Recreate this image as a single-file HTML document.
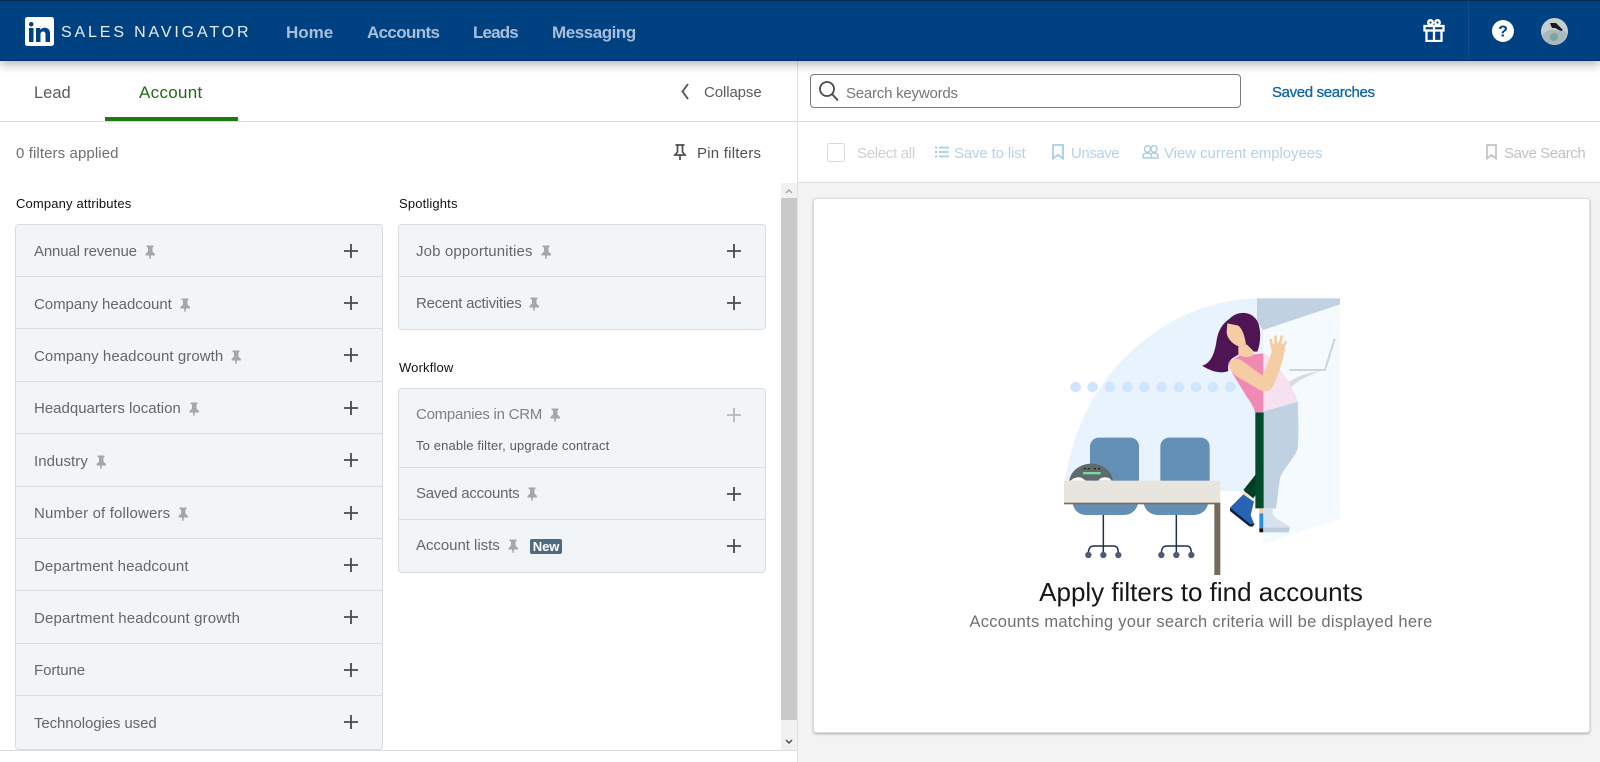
<!DOCTYPE html>
<html><head><meta charset="utf-8"><title>Sales Navigator</title>
<style>
*{box-sizing:border-box}
html,body{margin:0;padding:0;width:1600px;height:762px;overflow:hidden;background:#fff;font-family:"Liberation Sans",sans-serif}
.a{position:absolute;white-space:nowrap;line-height:20px}
#nav{position:absolute;left:0;top:0;width:1600px;height:61px;background:#004182;border-top:1px solid #0b2a55;border-bottom:1px solid #00306e;box-shadow:0 3px 10px rgba(0,0,0,.32);z-index:5}
.n{color:#a9bfd9;font-size:17px;font-weight:bold;top:22px;letter-spacing:-.5px}
.g{position:absolute;background:#f2f5f8;border:1px solid #d9dce0;border-radius:4px}
.r{position:absolute;left:0;right:0;border-bottom:1px solid #d9dce0;color:#666;font-size:15px}
.r:last-child{border-bottom:0}
.r span{position:absolute;left:17px;top:17px;white-space:nowrap;line-height:20px;display:flex;align-items:center}
.l .r span{left:18px;top:17.5px}
.r svg.p{margin-left:7px}
.r svg.x{position:absolute;left:328px;top:19px}
.h{font-size:13px;color:#111;top:194px;letter-spacing:.15px}
.t{font-size:15px}
</style></head><body>
<svg width="0" height="0" style="position:absolute"><defs>
<symbol id="pin" viewBox="0 0 12 14"><path d="M2.500 0.500h7v1.500l-1 .5v4l2.500 2.500v1.500H7L6.500 14h-1L5 10.500H1.500V9L4 6.500v-4l-1.500-.5z" fill="currentColor"/></symbol>
<symbol id="plus" viewBox="0 0 14 14"><path d="M6.100 0h1.800v6.100H14v1.800H7.900V14H6.100V7.900H0V6.100h6.100z" fill="currentColor"/></symbol>
</defs></svg>

<div id="nav">
<svg style="position:absolute;left:25px;top:16px" width="29" height="29" viewBox="0 0 29 29"><rect width="29" height="29" rx="2.500" fill="#fff"/><rect x="4" y="5" width="4.500" height="4.500" rx="2.200" fill="#004182"/><rect x="4" y="11" width="4.500" height="14" fill="#004182"/><path d="M11 11h4.300v2c.8-1.400 2.300-2.300 4.300-2.300 3.700 0 5.400 2.300 5.400 6V25h-4.500v-7.500c0-1.900-.7-3-2.400-3-1.800 0-2.600 1.300-2.600 3V25H11z" fill="#004182"/></svg>
<div class="a" style="left:61px;top:22px;color:#e8eef6;font-size:16px;letter-spacing:2.850px">SALES NAVIGATOR</div>
<div class="a n" style="left:286px;letter-spacing:0">Home</div>
<div class="a n" style="left:367px;letter-spacing:-.65px">Accounts</div>
<div class="a n" style="left:473px;letter-spacing:-.85px">Leads</div>
<div class="a n" style="left:552px;letter-spacing:-.45px">Messaging</div>
<div style="position:absolute;left:1468px;top:0;width:1px;height:59px;background:#0f4c8c"></div>
<svg style="position:absolute;left:1423px;top:18px" width="22" height="23" viewBox="0 0 22 23"><g fill="none" stroke="#fff" stroke-width="2.300"><rect x="1.500" y="7" width="19" height="4.500"/><path d="M3.500 11.500V22h15V11.500M11 7V22"/><circle cx="7.500" cy="3.500" r="2.300"/><circle cx="14.500" cy="3.500" r="2.300"/></g></svg>
<svg style="position:absolute;left:1492px;top:19px" width="22" height="22" viewBox="0 0 22 22"><circle cx="11" cy="11" r="11" fill="#fff"/><text x="11" y="16.500" text-anchor="middle" font-family="Liberation Sans" font-weight="bold" font-size="16" fill="#004182">?</text></svg>
<svg style="position:absolute;left:1541px;top:17px" width="27" height="27" viewBox="0 0 27 27"><circle cx="13.500" cy="13.500" r="13.500" fill="#c6ced0"/><path d="M1 17c4-4 8-6 13-5s8 0 12 3c-1 7-7 12-13 12-5 0-10-4-12-10z" fill="#a8b8bc"/><circle cx="13" cy="19" r="4" fill="#7fa59a"/><path d="M9 5l6 0 7 7-2 1-6-3-3 0z" fill="#17191c"/></svg>
</div>

<!-- left header -->
<div class="a" style="left:34px;top:83px;font-size:16.500px;color:#5b5b5b">Lead</div>
<div class="a" style="left:139px;top:83px;font-size:17px;color:#1f6b12;letter-spacing:.3px">Account</div>
<div style="position:absolute;left:105px;top:117px;width:133px;height:4px;background:#1d7a12"></div>
<div style="position:absolute;left:0;top:121px;width:1600px;height:1px;background:#dcdcdc"></div>
<svg style="position:absolute;left:680px;top:83px" width="11" height="17" viewBox="0 0 11 17"><path d="M8 1L2.500 8.500l5.500 7.500" fill="none" stroke="#555" stroke-width="1.900"/></svg>
<div class="a t" style="left:704px;top:83px;color:#5c5c5c;letter-spacing:-.1px">Collapse</div>
<div class="a t" style="left:16px;top:144px;color:#707070;letter-spacing:.1px">0 filters applied</div>
<svg style="position:absolute;left:673px;top:144px;color:#4d4d4d" width="14" height="17" viewBox="0 0 14 17"><path d="M2.500 1h9M4.500 1v7L2 11h10L9.500 8V1M7 11v5" fill="none" stroke="currentColor" stroke-width="1.700"/></svg>
<div class="a t" style="left:697px;top:144px;color:#505050;letter-spacing:.23px">Pin filters</div>
<div class="a h" style="left:16px">Company attributes</div>
<div class="a h" style="left:399px">Spotlights</div>
<div class="a h" style="left:399px;top:358px">Workflow</div>

<!-- company attributes -->
<div class="g l" style="left:15px;top:224px;width:368px;height:526px">
<div class="r" style="top:0;height:52px"><span style="letter-spacing:-.16px;top:16.500px">Annual revenue<svg class="p" width="12" height="14" color="#a7a7a7"><use href="#pin"/></svg></span><svg class="x" width="14" height="14" color="#4a4a4a"><use href="#plus"/></svg></div>
<div class="r" style="top:52px;height:52.400px"><span style="letter-spacing:-.04px">Company headcount<svg class="p" width="12" height="14" color="#a7a7a7"><use href="#pin"/></svg></span><svg class="x" width="14" height="14" color="#4a4a4a"><use href="#plus"/></svg></div>
<div class="r" style="top:104.400px;height:52.400px"><span style="letter-spacing:.07px">Company headcount growth<svg class="p" width="12" height="14" color="#a7a7a7"><use href="#pin"/></svg></span><svg class="x" width="14" height="14" color="#4a4a4a"><use href="#plus"/></svg></div>
<div class="r" style="top:156.800px;height:52.400px"><span>Headquarters location<svg class="p" width="12" height="14" color="#a7a7a7"><use href="#pin"/></svg></span><svg class="x" width="14" height="14" color="#4a4a4a"><use href="#plus"/></svg></div>
<div class="r" style="top:209.200px;height:52.400px"><span style="letter-spacing:.07px">Industry<svg class="p" width="12" height="14" color="#a7a7a7"><use href="#pin"/></svg></span><svg class="x" width="14" height="14" color="#4a4a4a"><use href="#plus"/></svg></div>
<div class="r" style="top:261.600px;height:52.400px"><span style="letter-spacing:.15px">Number of followers<svg class="p" width="12" height="14" color="#a7a7a7"><use href="#pin"/></svg></span><svg class="x" width="14" height="14" color="#4a4a4a"><use href="#plus"/></svg></div>
<div class="r" style="top:314px;height:52.400px"><span style="letter-spacing:.1px">Department headcount</span><svg class="x" width="14" height="14" color="#4a4a4a"><use href="#plus"/></svg></div>
<div class="r" style="top:366.400px;height:52.400px"><span style="letter-spacing:.16px">Department headcount growth</span><svg class="x" width="14" height="14" color="#4a4a4a"><use href="#plus"/></svg></div>
<div class="r" style="top:418.800px;height:52.400px"><span style="letter-spacing:-.09px">Fortune</span><svg class="x" width="14" height="14" color="#4a4a4a"><use href="#plus"/></svg></div>
<div class="r" style="top:471.200px;height:52.800px"><span style="letter-spacing:-.1px">Technologies used</span><svg class="x" width="14" height="14" color="#4a4a4a"><use href="#plus"/></svg></div>
</div>

<!-- spotlights -->
<div class="g" style="left:398px;top:224px;width:368px;height:106px">
<div class="r" style="top:0;height:52px"><span style="letter-spacing:.14px">Job opportunities<svg class="p" width="12" height="14" color="#a7a7a7"><use href="#pin"/></svg></span><svg class="x" width="14" height="14" color="#4a4a4a"><use href="#plus"/></svg></div>
<div class="r" style="top:52px;height:52px"><span style="letter-spacing:-.22px">Recent activities<svg class="p" width="12" height="14" color="#a7a7a7"><use href="#pin"/></svg></span><svg class="x" width="14" height="14" color="#4a4a4a"><use href="#plus"/></svg></div>
</div>

<!-- workflow -->
<div class="g" style="left:398px;top:388px;width:368px;height:185px">
<div class="r" style="top:0;height:78.500px"><span style="color:#808080;letter-spacing:-.25px;top:16px">Companies in CRM<svg class="p" width="12" height="14" color="#a7a7a7"><use href="#pin"/></svg></span><svg class="x" width="14" height="14" color="#b5b8ba"><use href="#plus"/></svg><span style="top:47px;font-size:13px;color:#5a5a5a;letter-spacing:.14px">To enable filter, upgrade contract</span></div>
<div class="r" style="top:78.500px;height:52.500px"><span style="letter-spacing:-.24px;top:16px">Saved accounts<svg class="p" width="12" height="14" color="#a7a7a7"><use href="#pin"/></svg></span><svg class="x" width="14" height="14" color="#4a4a4a"><use href="#plus"/></svg></div>
<div class="r" style="top:131px;height:52px"><span style="letter-spacing:-.04px;top:16px">Account lists<svg class="p" width="12" height="14" color="#a7a7a7"><use href="#pin"/></svg><b style="margin-left:11px;background:#4f6a83;color:#fff;font-size:13px;line-height:15px;padding:0 3px;border-radius:2px;letter-spacing:0">New</b></span><svg class="x" width="14" height="14" color="#4a4a4a"><use href="#plus"/></svg></div>
</div>

<!-- scrollbar -->
<div style="position:absolute;left:781px;top:183px;width:16px;height:567px;background:#f1f1f1"></div>
<div style="position:absolute;left:781px;top:198px;width:16px;height:522px;background:#c9c9c9"></div>
<svg style="position:absolute;left:784px;top:187px" width="10" height="8" viewBox="0 0 10 8"><path d="M2 6l3-3 3 3" fill="none" stroke="#a8a8a8" stroke-width="1.500"/></svg>
<svg style="position:absolute;left:784px;top:738px" width="10" height="8" viewBox="0 0 10 8"><path d="M2 2l3 3 3-3" fill="none" stroke="#505050" stroke-width="1.500"/></svg>
<div style="position:absolute;left:0;top:750px;width:797px;height:1px;background:#dcdcdc"></div>

<!-- right panel -->
<div style="position:absolute;left:797px;top:61px;width:1px;height:701px;background:#e2e2e2"></div>
<div style="position:absolute;left:798px;top:182px;width:802px;height:580px;background:#f3f3f3;border-top:1px solid #dcdcdc"></div>
<div style="position:absolute;left:810px;top:74px;width:431px;height:34px;border:1px solid #7c7c7c;border-radius:4px;background:#fff"></div>
<svg style="position:absolute;left:818px;top:80px" width="22" height="22" viewBox="0 0 22 22"><circle cx="9" cy="9" r="7" fill="none" stroke="#4a4a4a" stroke-width="1.800"/><path d="M14 14l6 6.500" stroke="#4a4a4a" stroke-width="1.900" fill="none"/></svg>
<div class="a t" style="left:846px;top:83.500px;color:#767676;letter-spacing:-.22px">Search keywords</div>
<div class="a" style="left:1272px;top:83px;font-size:15px;color:#0f65a8;letter-spacing:-.35px;-webkit-text-stroke:.3px #0f65a8">Saved searches</div>

<div style="position:absolute;left:827px;top:143px;width:18px;height:19px;border:1.500px solid #d8d8d8;border-radius:3px"></div>
<div class="a t" style="left:857px;top:144px;color:#d0d0d0;letter-spacing:-.3px">Select all</div>
<svg style="position:absolute;left:935px;top:146px" width="14" height="12" viewBox="0 0 14 12"><path d="M4 1.500h10M4 6h10M4 10.500h10" stroke="#a8cde6" stroke-width="1.700"/><path d="M0 .5h2.200v2H0zM0 5h2.200v2H0zM0 9.500h2.200v2H0z" fill="#a8cde6"/></svg>
<div class="a t" style="left:954px;top:144px;color:#b3d3ea;letter-spacing:-.15px">Save to list</div>
<svg style="position:absolute;left:1052px;top:144px" width="12" height="16" viewBox="0 0 12 16"><path d="M1 1h10v13.500L6 11l-5 3.500z" fill="none" stroke="#a8cde6" stroke-width="1.800"/></svg>
<div class="a t" style="left:1071px;top:144px;color:#b3d3ea;letter-spacing:-.45px">Unsave</div>
<svg style="position:absolute;left:1142px;top:145px" width="17" height="14" viewBox="0 0 17 14"><g fill="none" stroke="#a8cde6" stroke-width="1.400"><ellipse cx="5.500" cy="4" rx="3" ry="3.300"/><ellipse cx="12" cy="4" rx="3" ry="3.300"/><path d="M1 13v-2c0-2 2-3 4.500-3s4 1 4 3v2zM9.500 13H16v-2c0-2-2-3-4-3-1 0-1.500 0-2.500.5"/></g></svg>
<div class="a t" style="left:1164px;top:144px;color:#b3d3ea;letter-spacing:-.06px">View current employees</div>
<svg style="position:absolute;left:1486px;top:144px" width="11" height="16" viewBox="0 0 11 16"><path d="M1 1h9v13.500L5.500 11 1 14.500z" fill="none" stroke="#c4c4c4" stroke-width="1.800"/></svg>
<div class="a t" style="left:1504px;top:144px;color:#c2c2c2;letter-spacing:-.42px">Save Search</div>

<!-- card -->
<div style="position:absolute;left:813px;top:198px;width:777px;height:535px;background:#fff;border:1px solid #dcdcdc;border-radius:3px;box-shadow:0 1px 2px rgba(0,0,0,.3)"></div>

<!-- illustration -->
<svg style="position:absolute;left:1030px;top:285px" width="310" height="290" viewBox="0 0 930 870">
<path d="M103 620C125 300 390 40 690 40H702V618z" fill="#e8f3fe"/>
<path d="M700 135L930 58V702L700 778z" fill="#f5faff"/>
<path d="M681 40H930V58L700 135L681 110z" fill="#c0d1e1"/>
<g fill="#d0e6fe"><circle cx="137" cy="306" r="16"/><circle cx="188" cy="306" r="16"/><circle cx="240" cy="306" r="16"/><circle cx="292" cy="306" r="16"/><circle cx="343" cy="306" r="16"/><circle cx="395" cy="306" r="16"/><circle cx="446" cy="306" r="16"/><circle cx="498" cy="306" r="16"/><circle cx="549" cy="306" r="16"/><circle cx="601" cy="306" r="16"/></g>
<path d="M914 161L885 255H778" fill="none" stroke="#c9d4de" stroke-width="6"/>
<path d="M768 298C790 280 820 265 870 258L825 278C805 288 790 298 780 310z" fill="#dad9dc"/>
<!-- legs -->
<path d="M701 378L803 350C806 400 806 450 803 490C800 510 760 550 750 580C745 610 742 650 738 670H701z" fill="#c0d1e1"/>
<path d="M676 382H701V670H676V625L640 615L676 570z" fill="#004b29"/>
<path d="M642 618L676 570V625H680L670 640z" fill="#033d22"/>
<path d="M640 620L650 628L668 645L662 640L642 628z" fill="#f5cda4"/>
<path d="M640 628L672 650L662 690L672 716L660 725L600 668z" fill="#2864b4"/>
<path d="M600 668L662 718L675 715L668 725L658 724L600 678z" fill="#111f3a"/>
<path d="M688 685H700V730H688z" fill="#2f8cea"/><path d="M688 730H700V742H688z" fill="#111"/>
<path d="M688 670H700V685H688z" fill="#f5cda4"/>
<path d="M700 670H728V683C728 700 760 712 775 722C782 730 778 742 770 742H700z" fill="#d7e2ee"/>
<path d="M700 728H780L776 742H700z" fill="#bfcedf"/>
<!-- hair -->
<path d="M600 100C625 75 670 78 685 115C695 145 690 180 682 200L640 200L610 218C598 225 592 240 595 258C570 268 540 258 516 242C545 235 555 200 560 165C565 135 578 115 600 100z" fill="#4f1454"/>
<!-- torso -->
<path d="M700 205L628 212L595 232C600 260 630 300 650 335C665 355 672 370 675 382H700z" fill="#f08ab4"/>
<path d="M700 205C720 210 740 240 770 280C785 305 800 335 803 350L700 380z" fill="#f5e1ef"/>
<!-- neck and face -->
<path d="M625 185L650 178L672 200L668 212C650 220 635 215 625 208z" fill="#f5cda4"/>
<path d="M592 115L625 122C640 135 645 160 648 178L628 185C608 178 590 160 590 140z" fill="#f5cda4"/>
<!-- arm -->
<path d="M598 235C605 218 625 218 640 230L697 272C708 250 718 225 725 200L765 190C760 225 745 270 728 305C720 320 705 322 690 315L630 280C610 268 592 250 598 235z" fill="#f5cda4"/>
<circle cx="745" cy="192" r="20" fill="#f5cda4"/>
<path d="M728 195L722 165M738 185L736 155M748 182L755 155M758 190L767 172" stroke="#f5cda4" stroke-width="8" stroke-linecap="round" fill="none"/>
<!-- chairs -->
<rect x="180" y="458" width="147" height="150" rx="26" fill="#6490b7"/>
<rect x="391" y="458" width="148" height="150" rx="26" fill="#6490b7"/>
<path d="M127 650H325C322 675 305 690 280 690H170C145 690 130 675 127 650z" fill="#6490b7"/>
<path d="M340 650H535C533 675 515 690 490 690H385C360 690 343 675 340 650z" fill="#6490b7"/>
<g fill="none" stroke="#1c2f4d" stroke-width="4.500"><path d="M220 690V808M175 808C175 790 180 783 192 783H250C262 783 265 790 265 808"/><path d="M439 690V808M394 808C394 790 399 783 411 783H469C481 783 484 790 484 808"/></g>
<g fill="#4d5a7d"><circle cx="175" cy="810" r="9.500"/><circle cx="220" cy="810" r="9.500"/><circle cx="265" cy="810" r="9.500"/><circle cx="394" cy="810" r="9.500"/><circle cx="439" cy="810" r="9.500"/><circle cx="484" cy="810" r="9.500"/></g>
<!-- phone -->
<path d="M118 587C122 555 155 536 184 536C215 536 245 555 249 587z" fill="#5f6a6d"/>
<path d="M122 587C130 578 150 572 160 582L167 587zM205 587C212 575 235 572 245 587z" fill="#fff"/>
<rect x="159" y="561" width="53" height="7" fill="#76dba0"/>
<g fill="#222"><rect x="161" y="549" width="6" height="4"/><rect x="173" y="549" width="6" height="4"/><rect x="192" y="549" width="6" height="4"/><rect x="204" y="549" width="6" height="4"/></g>
<!-- table -->
<rect x="102" y="587" width="469" height="67" fill="#e8e5df"/>
<rect x="102" y="653" width="469" height="5" fill="#7a6d5c"/>
<rect x="553" y="655" width="18" height="215" fill="#736a5c"/>
</svg>

<div class="a" style="left:1000px;top:577px;width:402px;text-align:center;font-size:26px;line-height:30px;color:#161616">Apply filters to find accounts</div>
<div class="a" style="left:950px;top:612px;width:502px;text-align:center;font-size:16.500px;color:#707070;letter-spacing:.27px">Accounts matching your search criteria will be displayed here</div>
</body></html>
